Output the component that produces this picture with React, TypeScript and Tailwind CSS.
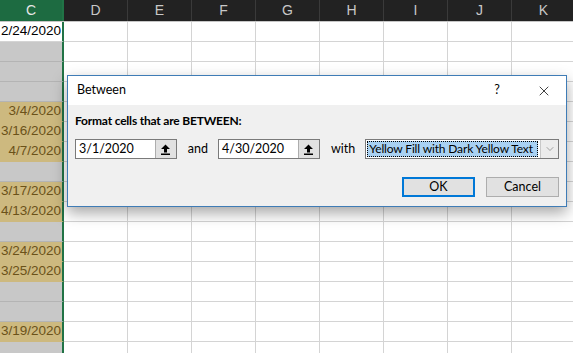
import { X, ChevronDown } from "lucide-react";

// Column C contents: "w" = active cell, "g" = selected empty, "y" = yellow match
const colC: { v: string; k: "w" | "g" | "y" }[] = [
  { v: "2/24/2020", k: "w" },
  { v: "", k: "g" },
  { v: "", k: "g" },
  { v: "", k: "g" },
  { v: "3/4/2020", k: "y" },
  { v: "3/16/2020", k: "y" },
  { v: "4/7/2020", k: "y" },
  { v: "", k: "g" },
  { v: "3/17/2020", k: "y" },
  { v: "4/13/2020", k: "y" },
  { v: "", k: "g" },
  { v: "3/24/2020", k: "y" },
  { v: "3/25/2020", k: "y" },
  { v: "", k: "g" },
  { v: "", k: "g" },
  { v: "3/19/2020", k: "y" },
  { v: "", k: "g" },
];

const cols = ["D", "E", "F", "G", "H", "I", "J", "K"];

function UploadIcon() {
  return (
    <svg width="11" height="11" viewBox="0 0 11 11">
      <path d="M5.5 0.5 L10 5 H7 V8.5 H4 V5 H1 Z" fill="#000" />
      <rect x="1" y="9.5" width="9" height="1.5" fill="#000" />
    </svg>
  );
}

function RefField({ value, width }: { value: string; width: string }) {
  return (
    <div className={`flex h-5 ${width} border border-[#7a7a7a] bg-white`}>
      <div className="flex-1 flex items-center pl-[3px] text-[12.5px] text-black">
        {value}
      </div>
      <div className="w-[21px] flex items-center justify-center bg-[#e1e1e1] border-l border-[#adadad]">
        <UploadIcon />
      </div>
    </div>
  );
}

function Dialog() {
  return (
    <div
      className="absolute left-[67px] top-[75px] w-[500px] h-[132px] border border-[#3f7cb6] bg-[#f0f0f0] shadow-[0_6px_14px_rgba(0,0,0,0.35)] flex flex-col"
      style={{ fontFamily: 'Lato, "Liberation Sans", sans-serif' }}
    >
      {/* Title bar */}
      <div className="h-[29px] bg-white flex items-center pl-[9px] pr-[14px] text-[12.5px] text-black">
        <span className="flex-1">Between</span>
        <span className="w-4 text-center mr-[31px]">?</span>
        <X size={16} strokeWidth={1.2} color="#111" />
      </div>
      <div className="flex flex-col px-[7px] pt-[8px]">
        <div className="text-[12px] font-bold tracking-[-0.2px] text-black leading-[16px]">
          Format cells that are BETWEEN:
        </div>
        <div className="flex items-center mt-[10px] text-[12.5px] text-black">
          <RefField value="3/1/2020" width="w-[103px]" />
          <span className="ml-[11px] mr-[10px]">and</span>
          <RefField value="4/30/2020" width="w-[103px]" />
          <span className="ml-[11px] mr-[10px]">with</span>
          <div className="flex h-5 w-[196px] border border-[#7a7a7a] bg-white">
            <div className="flex-1 flex items-center py-[1px] pl-[1px] pr-[2px]">
              <div className="h-full w-full flex items-center bg-[#a9d1f2] border border-dotted border-black px-[1px] text-[12px] tracking-[-0.15px] leading-none whitespace-nowrap overflow-hidden">
                Yellow Fill with Dark Yellow Text
              </div>
            </div>
            <div className="w-[18px] flex items-center justify-center bg-[#ececec] border-l border-[#c8c8c8]">
              <ChevronDown size={12} strokeWidth={1} color="#555" />
            </div>
          </div>
        </div>
        <div className="flex justify-end gap-[11px] mt-[18px] text-[12.5px] text-black">
          <button className="w-[73px] h-5 bg-[#e1e1e1] border-2 border-[#0078d7] flex items-center justify-center">
            OK
          </button>
          <button className="w-[73px] h-5 bg-[#e1e1e1] border border-[#adadad] flex items-center justify-center">
            Cancel
          </button>
        </div>
      </div>
    </div>
  );
}

export default function App() {
  return (
    <div
      className="relative w-[573px] h-[353px] overflow-hidden bg-white"
      style={{ fontFamily: '"Liberation Sans", Arial, sans-serif' }}
    >
      {/* Column headers */}
      <div className="flex h-[22px] bg-[#222222] border-b border-[#c6c6c6]">
        <div className="w-16 shrink-0 bg-[#1d6b41] text-[#e6e6e6] text-[14px] flex items-center justify-center border-r-2 border-[#217346]">
          C
        </div>
        {cols.map((c) => (
          <div
            key={c}
            className="w-16 shrink-0 text-[#c8c8c8] text-[14px] flex items-center justify-center border-r border-[#3a3a3a]"
          >
            {c}
          </div>
        ))}
      </div>
      {/* Rows */}
      {colC.map((cell, i) => (
        <div key={i} className="flex h-5">
          <div
            className={`w-16 shrink-0 flex items-center justify-end pr-[1px] text-[13.5px] whitespace-nowrap border-r-2 border-r-[#217346] border-b ${
              cell.k === "w"
                ? "bg-white text-black border-b-[#d4d4d4]"
                : cell.k === "g"
                ? "bg-[#c8c8c8] border-b-[#b4b4b4]"
                : "bg-[#cdb97f] text-[#6b5219] border-b-[#cdb97f]"
            }`}
          >
            {cell.v}
          </div>
          {cols.map((c) => (
            <div
              key={c}
              className="w-16 shrink-0 border-r border-b border-[#d4d4d4]"
            />
          ))}
        </div>
      ))}
      <Dialog />
    </div>
  );
}
